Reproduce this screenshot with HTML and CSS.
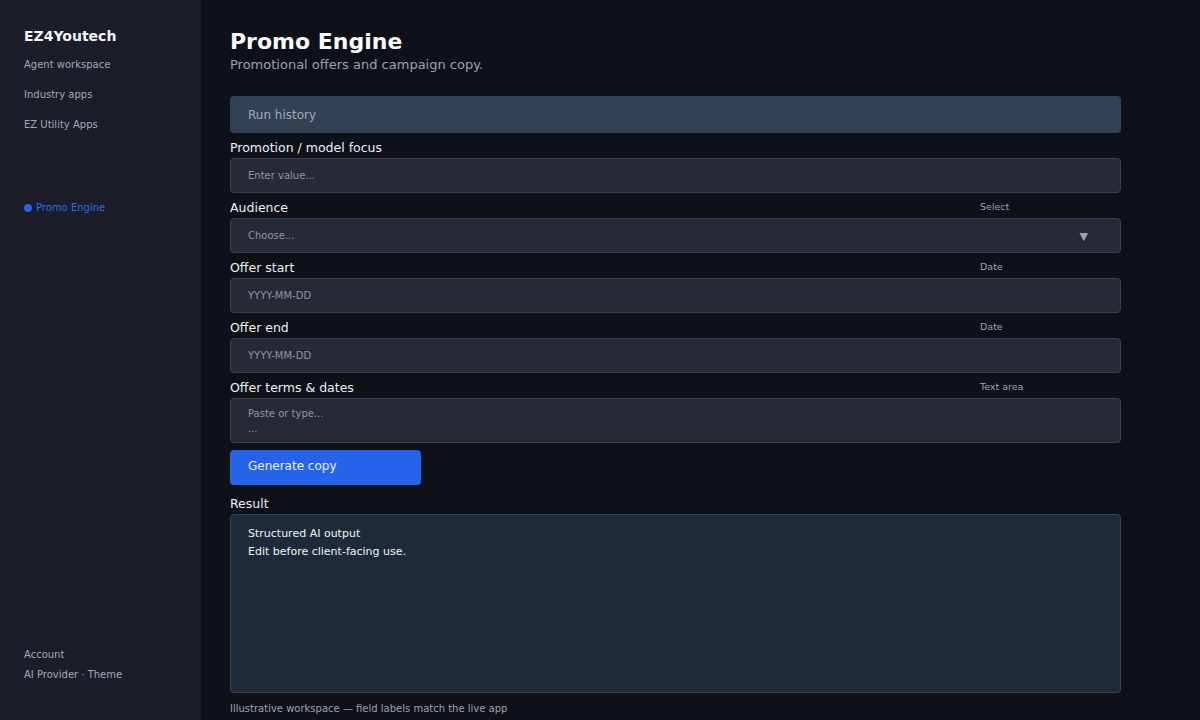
FILE: index.html
```
<!DOCTYPE html>
<html lang="en">
<head>
  <meta charset="UTF-8">
  <meta name="viewport" content="width=device-width, initial-scale=1.0">
  <title>Promo Engine - EZ4Youtech</title>
  <link rel="stylesheet" href="styles.css">
</head>
<body>
  <div class="app">
    <aside class="sidebar">
      <div class="brand">EZ4Youtech</div>
      <nav class="nav">
        <a href="#">Agent workspace</a>
        <a href="#">Industry apps</a>
        <a href="#">EZ Utility Apps</a>
      </nav>
      <div class="current"><span class="dot"></span>Promo Engine</div>
      <div class="sidebar-foot">
        <div>Account</div>
        <div>AI Provider · Theme</div>
      </div>
    </aside>

    <main class="main">
      <h1>Promo Engine</h1>
      <p class="subtitle">Promotional offers and campaign copy.</p>

      <div class="panel">
        <div class="history">Run history</div>

        <div class="field">
          <div class="label-row"><label>Promotion / model focus</label></div>
          <div class="input">Enter value...</div>
        </div>

        <div class="field">
          <div class="label-row"><label>Audience</label><span class="hint">Select</span></div>
          <div class="input select">Choose...<span class="arrow">▼</span></div>
        </div>

        <div class="field">
          <div class="label-row"><label>Offer start</label><span class="hint">Date</span></div>
          <div class="input">YYYY-MM-DD</div>
        </div>

        <div class="field">
          <div class="label-row"><label>Offer end</label><span class="hint">Date</span></div>
          <div class="input">YYYY-MM-DD</div>
        </div>

        <div class="field">
          <div class="label-row"><label>Offer terms &amp; dates</label><span class="hint">Text area</span></div>
          <div class="input textarea">Paste or type...<br>...</div>
        </div>

        <button class="generate">Generate copy</button>

        <div class="field result-field">
          <div class="label-row"><label>Result</label></div>
          <div class="result">Structured AI output<br>Edit before client-facing use.</div>
        </div>

        <p class="note">Illustrative workspace — field labels match the live app</p>
      </div>
    </main>
  </div>
</body>
</html>
```

FILE: styles.css
```
body {
  margin: 0;
  padding: 0;
  font-family: "DejaVu Sans", sans-serif;
  background-color: #0e1118;
  color: #e5e7eb;
}

.app {
  display: flex;
  height: 720px;
  overflow: hidden;
}

.sidebar {
  width: 201px;
  flex-shrink: 0;
  background-color: #1b1d29;
  padding: 27px 0 0 24px;
  box-sizing: border-box;
  display: flex;
  flex-direction: column;
}

.brand {
  font-size: 14px;
  font-weight: bold;
  color: #f3f4f6;
  line-height: 18px;
}

.nav {
  display: flex;
  flex-direction: column;
  gap: 16px;
  margin-top: 13px;
}

.nav a {
  font-size: 10px;
  line-height: 14px;
  color: #a3a9b6;
  text-decoration: none;
}

.current {
  margin-top: 69px;
  font-size: 10px;
  line-height: 14px;
  color: #2f6be8;
  display: flex;
  align-items: center;
}

.dot {
  width: 8px;
  height: 8px;
  border-radius: 50%;
  background-color: #2563eb;
  margin-right: 4px;
}

.sidebar-foot {
  margin-top: auto;
  margin-bottom: 38px;
  display: flex;
  flex-direction: column;
  gap: 6px;
  font-size: 10px;
  line-height: 14px;
  color: #a3a9b6;
}

.main {
  flex: 1;
  padding: 29px 0 0 29px;
}

h1 {
  margin: 0;
  font-size: 22px;
  line-height: 26px;
  font-weight: bold;
  color: #f9fafb;
}

.subtitle {
  margin: 2px 0 0;
  font-size: 13px;
  line-height: 16px;
  color: #9ca3af;
}

.panel {
  width: 891px;
  margin-top: 23px;
  display: flex;
  flex-direction: column;
  gap: 7px;
}

.history {
  height: 37px;
  box-sizing: border-box;
  padding: 0 18px;
  display: flex;
  align-items: center;
  background-color: #334155;
  border-radius: 4px;
  font-size: 12px;
  color: #a0aab8;
}

.field {
  display: flex;
  flex-direction: column;
}

.label-row {
  display: grid;
  grid-template-columns: 750px auto;
  height: 18px;
  align-items: center;
}

.label-row label {
  font-size: 12.5px;
  color: #eef0f3;
  margin-top: -4px;
}

.hint {
  font-size: 9.5px;
  color: #9ca3af;
  margin-top: -5px;
}

.input {
  height: 35px;
  box-sizing: border-box;
  padding: 0 17px;
  display: flex;
  align-items: center;
  background-color: #262a36;
  border: 1px solid #3b404e;
  border-radius: 4px;
  font-size: 10px;
  color: #8d95a3;
}

.select {
  justify-content: space-between;
}

.arrow {
  font-size: 11px;
  color: #9aa3b3;
  margin-right: 15px;
  margin-top: 2px;
}

.textarea {
  height: 45px;
  display: block;
  padding-top: 7px;
  line-height: 15px;
}

.generate {
  width: 191px;
  height: 35px;
  border: none;
  border-radius: 4px;
  background-color: #2563eb;
  color: #eef2ff;
  font-family: "DejaVu Sans", sans-serif;
  font-size: 12px;
  text-align: left;
  padding: 0 18px 3px;
  cursor: pointer;
}

.result-field {
  margin-top: 4px;
}

.result {
  height: 179px;
  box-sizing: border-box;
  padding: 10px 17px;
  background-color: #1e293b;
  border: 1px solid #394356;
  border-radius: 4px;
  font-size: 11px;
  line-height: 18px;
  color: #f3f4f6;
}

.note {
  margin: 3px 0 0;
  font-size: 10px;
  color: #9ca3af;
}
```
